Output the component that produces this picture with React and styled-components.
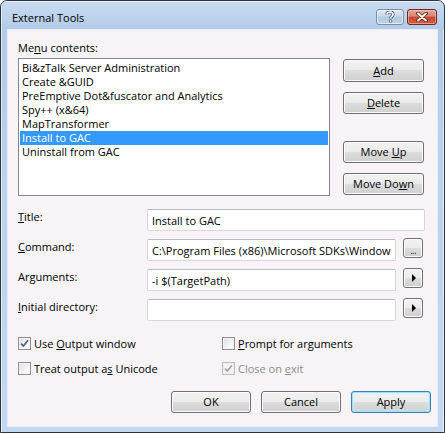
import React from "react";
import styled, { createGlobalStyle } from "styled-components";

const GlobalStyle = createGlobalStyle`
  html, body {
    margin: 0;
    padding: 0;
    background: #ffffff;
  }
  body {
    font-family: "Open Sans", "Liberation Sans", sans-serif;
    font-size: 11px;
    color: #000;
  }
`;

const tools = [
  "Bi&zTalk Server Administration",
  "Create &GUID",
  "PreEmptive Dot&fuscator and Analytics",
  "Spy++ (x&64)",
  "MapTransformer",
  "Install to GAC",
  "Uninstall from GAC",
];

// renders "Me&nu" style labels with the accelerator letter underlined
const Accel = ({ text }) => {
  const i = text.indexOf("&");
  if (i < 0) return <span>{text}</span>;
  return (
    <span>
      {text.slice(0, i)}
      <Key>{text[i + 1]}</Key>
      {text.slice(i + 2)}
    </span>
  );
};

const App = () => {
  return (
    <>
      <GlobalStyle />
      <Window>
        <TitleBar>
          <Caption>External Tools</Caption>
          <CaptionButtons>
            <HelpButton>
              <svg width="10" height="12" viewBox="0 0 10 12">
                <path
                  d="M2 3.5 C2 1.5 3.5 1 5 1 C7 1 8 2 8 3.5 C8 5.2 5.6 5.4 5.6 7.5"
                  fill="none"
                  stroke="#4d5f75"
                  strokeWidth="3.2"
                />
                <path
                  d="M2 3.5 C2 1.5 3.5 1 5 1 C7 1 8 2 8 3.5 C8 5.2 5.6 5.4 5.6 7.5"
                  fill="none"
                  stroke="#ffffff"
                  strokeWidth="1.6"
                />
                <circle cx="5.6" cy="10" r="1.7" fill="#4d5f75" />
                <circle cx="5.6" cy="10" r="0.9" fill="#ffffff" />
              </svg>
            </HelpButton>
            <CloseButton>
              <svg width="12" height="10" viewBox="0 0 12 10">
                <path d="M2 1.5 L10 8.5 M10 1.5 L2 8.5" stroke="#5b1d14" strokeWidth="3.6" strokeLinecap="round" />
                <path d="M2 1.5 L10 8.5 M10 1.5 L2 8.5" stroke="#ffffff" strokeWidth="2" strokeLinecap="round" />
              </svg>
            </CloseButton>
          </CaptionButtons>
        </TitleBar>
        <FrameBody>
          <Client>
            <SectionLabel>
              <Accel text="Me&nu contents:" />
            </SectionLabel>
            <TopRow>
              <ListBox>
                {tools.map((t, idx) => (
                  <ListItem key={t} $selected={idx === 5}>
                    {t}
                  </ListItem>
                ))}
              </ListBox>
              <SideButtons>
                <Button $top={1} $h={23}>
                  <Accel text="&Add" />
                </Button>
                <Button $top={10}>
                  <Accel text="&Delete" />
                </Button>
                <Button $top={27}>
                  <Accel text="Move &Up" />
                </Button>
                <Button $top={10}>
                  <Accel text="Move Do&wn" />
                </Button>
              </SideButtons>
            </TopRow>

            <Form>
              <FieldLabel>
                <Accel text="&Title:" />
              </FieldLabel>
              <TextBox $wide readOnly value="Install to GAC" />

              <FieldLabel>
                <Accel text="&Command:" />
              </FieldLabel>
              <TextBox readOnly value="C:\Program Files (x86)\Microsoft SDKs\Windows\v7.0A\bin\gacutil.exe" />
              <SmallButton>
                <Dots>...</Dots>
              </SmallButton>

              <FieldLabel>
                <Accel text="Ar&guments:" />
              </FieldLabel>
              <TextBox readOnly value="-i $(TargetPath)" />
              <SmallButton>
                <Arrow />
              </SmallButton>

              <FieldLabel>
                <Accel text="&Initial directory:" />
              </FieldLabel>
              <TextBox readOnly value="" />
              <SmallButton>
                <Arrow />
              </SmallButton>
            </Form>

            <Options>
              <Check checked text="Use &Output window" />
              <Check text="&Prompt for arguments" />
              <Check text="Treat output a&s Unicode" />
              <Check checked disabled text="Close on &exit" />
            </Options>

            <Footer>
              <Button $w={80}>OK</Button>
              <Button $w={80}>Cancel</Button>
              <Button $w={80} $default>
                Apply
              </Button>
            </Footer>
          </Client>
        </FrameBody>
      </Window>
    </>
  );
};

const Check = ({ checked, disabled, text }) => (
  <CheckRow $disabled={disabled}>
    <Box $disabled={disabled}>
      {checked && (
        <svg width="9" height="9" viewBox="0 0 9 9">
          <path
            d="M1 4.6 L3.4 7 L8 1.2"
            fill="none"
            stroke={disabled ? "#a2a2a2" : "#4a5f97"}
            strokeWidth="1.6"
          />
        </svg>
      )}
    </Box>
    <Accel text={text} />
  </CheckRow>
);

export default App;

const Window = styled.div`
  width: 445px;
  height: 433px;
  box-sizing: border-box;
  border: 1px solid #30363f;
  border-radius: 7px 7px 0 0;
  box-shadow: 0 1px 0 #47d4ea;
  background: linear-gradient(to bottom, #c9dcf1 0px, #b2cbe7 28px, #bcd3ee 200px, #c4d8f0 100%);
  display: flex;
  flex-direction: column;
  overflow: hidden;
`;

const TitleBar = styled.div`
  height: 28px;
  display: flex;
  align-items: flex-start;
  justify-content: space-between;
  padding: 0 7px 0 11px;
  box-shadow: inset 1px 1px 0 rgba(255, 255, 255, 0.6);
`;

const Caption = styled.span`
  margin-top: 9px;
  font-size: 11px;
  line-height: 16px;
  color: #000;
`;

const CaptionButtons = styled.div`
  display: flex;
  gap: 3px;
  margin-top: 8px;
`;

const CaptionButton = styled.div`
  height: 16px;
  box-sizing: border-box;
  border-radius: 3px;
  display: flex;
  align-items: center;
  justify-content: center;
`;

const HelpButton = styled(CaptionButton)`
  width: 28px;
  border: 1px solid #7c8ea6;
  background: linear-gradient(to bottom, #dce8f5 0%, #c6d8ec 45%, #b2c9e2 50%, #bed3ea 100%);
  box-shadow: inset 0 0 0 1px rgba(255, 255, 255, 0.55);
`;

const CloseButton = styled(CaptionButton)`
  width: 30px;
  border: 1px solid #6b2a22;
  background: linear-gradient(to bottom, #e7a597 0%, #d88472 45%, #c8452f 50%, #d2613f 100%);
  box-shadow: inset 0 0 0 1px rgba(255, 210, 200, 0.5);
`;

const FrameBody = styled.div`
  flex: 1;
  display: flex;
  padding: 0 6px 5px 6px;
  box-shadow: inset 1px 0 0 rgba(255, 255, 255, 0.6), inset -1px 0 0 rgba(255, 255, 255, 0.6);
`;

const Client = styled.div`
  flex: 1;
  box-sizing: border-box;
  background: #f7f3f7;
  border: 1px solid #e6edf7;
  padding: 10px 6px 0 10px;
  display: flex;
  flex-direction: column;
`;

const Key = styled.span`
  text-decoration: underline;
  text-underline-offset: 1px;
`;

const SectionLabel = styled.div`
  line-height: 15px;
  margin-bottom: 3px;
`;

const TopRow = styled.div`
  display: flex;
  gap: 13px;
`;

const ListBox = styled.div`
  width: 312px;
  height: 138px;
  box-sizing: border-box;
  border: 1px solid #828790;
  background: #fff;
  padding: 2px 1px;
`;

const ListItem = styled.div`
  height: 14px;
  line-height: 14px;
  padding-left: 2px;
  white-space: nowrap;
  background: ${(p) => (p.$selected ? "#3399ff" : "transparent")};
  color: ${(p) => (p.$selected ? "#fff" : "#000")};
`;

const SideButtons = styled.div`
  display: flex;
  flex-direction: column;
  width: 81px;
`;

const Button = styled.div`
  box-sizing: border-box;
  width: ${(p) => (p.$w ? `${p.$w}px` : "100%")};
  height: ${(p) => p.$h || 22}px;
  margin-top: ${(p) => p.$top || 0}px;
  display: flex;
  align-items: center;
  justify-content: center;
  border: 1px solid ${(p) => (p.$default ? "#3c7fb1" : "#707070")};
  border-radius: 3px;
  background: linear-gradient(to bottom, #f2f2f2 0%, #ebebeb 50%, #dddddd 50%, #cfcfcf 100%);
  box-shadow: ${(p) =>
    p.$default ? "inset 0 0 0 1px #9ee0f8, inset 0 0 3px 1px #c9efff" : "inset 0 0 0 1px #fcfcfc"};
  line-height: 14px;
  white-space: nowrap;
  color: #000;
  cursor: default;
`;

const Form = styled.div`
  margin-top: 13px;
  display: grid;
  grid-template-columns: 122px 249px 20px;
  column-gap: 7px;
  row-gap: 8px;
  grid-auto-rows: 22px;
`;

const FieldLabel = styled.div`
  line-height: 15px;
  white-space: nowrap;
`;

const TextBox = styled.input`
  grid-column: ${(p) => (p.$wide ? "2 / 4" : "auto")};
  width: ${(p) => (p.$wide ? "278px" : "249px")};
  height: 22px;
  box-sizing: border-box;
  margin: 0;
  padding: 0 4px;
  border: 1px solid #d5d8de;
  border-top-color: #b7bac1;
  border-radius: 2px;
  background: #fff;
  font-family: inherit;
  font-size: 11px;
  color: #000;
  outline: none;
`;

const SmallButton = styled.div`
  width: 20px;
  height: 20px;
  box-sizing: border-box;
  margin-top: -1px;
  border: 1px solid #707070;
  border-radius: 3px;
  background: linear-gradient(to bottom, #f2f2f2 0%, #ebebeb 50%, #dddddd 50%, #cfcfcf 100%);
  box-shadow: inset 0 0 0 1px #fcfcfc;
  display: flex;
  align-items: center;
  justify-content: center;
`;

const Dots = styled.span`
  font-size: 9px;
  line-height: 9px;
  margin-top: 4px;
  letter-spacing: -0.5px;
`;

const Arrow = styled.span`
  width: 0;
  height: 0;
  border-top: 4px solid transparent;
  border-bottom: 4px solid transparent;
  border-left: 4px solid #000;
  margin-left: 1px;
`;

const Options = styled.div`
  margin-top: 15px;
  display: grid;
  grid-template-columns: 204px 1fr;
  grid-auto-rows: 15px;
  row-gap: 10px;
`;

const CheckRow = styled.div`
  display: flex;
  align-items: center;
  gap: 3px;
  line-height: 15px;
  white-space: nowrap;
  color: ${(p) => (p.$disabled ? "#8d8d8d" : "#000")};
`;

const Box = styled.div`
  width: 13px;
  height: 13px;
  box-sizing: border-box;
  border: 1px solid ${(p) => (p.$disabled ? "#bcbcbc" : "#8e8f8f")};
  background: ${(p) =>
    p.$disabled ? "#f4f4f4" : "linear-gradient(135deg, #dcdcdc 0%, #f4f4f4 60%, #ffffff 100%)"};
  box-shadow: inset 0 0 0 1px ${(p) => (p.$disabled ? "#f0f0f0" : "#f4f4f4")};
  display: flex;
  align-items: center;
  justify-content: center;
`;

const Footer = styled.div`
  margin-top: 15px;
  display: flex;
  justify-content: flex-end;
  gap: 10px;
`;
